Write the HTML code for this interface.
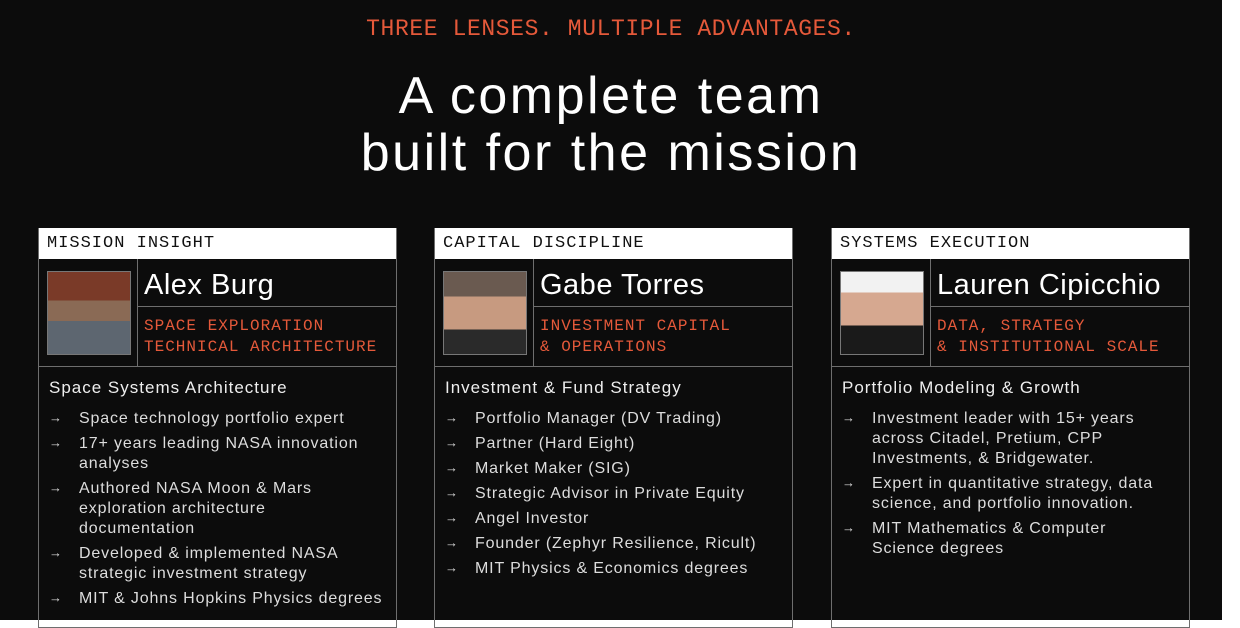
<!DOCTYPE html>
<html><head><meta charset="utf-8"><style>
*{margin:0;padding:0;box-sizing:border-box}
body{width:1240px;height:620px;background:#fff;position:relative;overflow:hidden;font-family:"Liberation Sans",sans-serif}
.bg{position:absolute;left:0;top:0;width:1222px;height:620px;background:#0c0c0c}
.kick{position:absolute;top:16px;left:0;width:1222px;text-align:center;font-family:"Liberation Mono",monospace;color:#e5593a;font-size:23px;letter-spacing:0.6px}
h1{position:absolute;top:68px;left:0;width:1222px;text-align:center;color:#fff;font-weight:400;font-size:52px;line-height:57px;letter-spacing:2.5px}
.card{position:absolute;top:228px;width:359px;height:400px;border:1.5px solid #6e6e6e;border-top:none}
.hd{height:31px;background:#fff;color:#111;font-family:"Liberation Mono",monospace;font-size:17px;padding:6px 8px;letter-spacing:1px}
.ph{position:absolute;left:0;top:31px;width:99px;height:108px;border-right:1.5px solid #6e6e6e;border-bottom:1.5px solid #6e6e6e}
.ph div{position:absolute;left:8px;top:12px;width:84px;height:84px;border:1.5px solid #777}
.nm{position:absolute;left:99px;top:31px;right:0;height:48px;border-bottom:1.5px solid #6e6e6e;color:#fff;font-size:29px;padding:10px 6px 0;letter-spacing:0.5px}
.rl{position:absolute;left:99px;top:79px;right:0;height:60px;border-bottom:1.5px solid #6e6e6e;color:#e5593a;font-family:"Liberation Mono",monospace;font-size:16px;line-height:21px;padding:9px 6px;letter-spacing:1px}
.bd{position:absolute;left:10px;top:150px;right:0;color:#eee}
.bd h3{font-weight:400;font-size:17px;margin-bottom:11px;letter-spacing:1px}
.bd li{list-style:none;position:relative;padding-left:30px;font-size:16px;line-height:20px;margin-bottom:5px;color:#ddd;letter-spacing:0.85px}
.bd li:before{content:"→";position:absolute;left:0;top:-1px;font-size:13px}
</style></head><body>
<div class="bg"></div>
<div class="kick">THREE LENSES. MULTIPLE ADVANTAGES.</div>
<h1>A complete team<br>built for the mission</h1>

<div class="card" style="left:38px">
<div class="hd">MISSION INSIGHT</div>
<div class="ph"><div style="background:linear-gradient(#7a3a28 0 35%,#8a6a55 35% 60%,#5d6670 60%)"></div></div>
<div class="nm">Alex Burg</div>
<div class="rl">SPACE EXPLORATION<br>TECHNICAL ARCHITECTURE</div>
<div class="bd"><h3>Space Systems Architecture</h3><ul>
<li>Space technology portfolio expert</li>
<li>17+ years leading NASA innovation<br>analyses</li>
<li>Authored NASA Moon &amp; Mars<br>exploration architecture<br>documentation</li>
<li>Developed &amp; implemented NASA<br>strategic investment strategy</li>
<li style="white-space:nowrap">MIT &amp; Johns Hopkins Physics degrees</li></ul></div>
</div>

<div class="card" style="left:434px">
<div class="hd">CAPITAL DISCIPLINE</div>
<div class="ph"><div style="background:linear-gradient(#6a5a50 0 30%,#c79a80 30% 70%,#2a2a2a 70%)"></div></div>
<div class="nm">Gabe Torres</div>
<div class="rl">INVESTMENT CAPITAL<br>&amp; OPERATIONS</div>
<div class="bd"><h3>Investment &amp; Fund Strategy</h3><ul>
<li>Portfolio Manager (DV Trading)</li>
<li>Partner (Hard Eight)</li>
<li>Market Maker (SIG)</li>
<li>Strategic Advisor in Private Equity</li>
<li>Angel Investor</li>
<li>Founder (Zephyr Resilience, Ricult)</li>
<li>MIT Physics &amp; Economics degrees</li></ul></div>
</div>

<div class="card" style="left:831px">
<div class="hd">SYSTEMS EXECUTION</div>
<div class="ph"><div style="background:linear-gradient(#f2f2f2 0 25%,#d6a890 25% 65%,#1a1a1a 65%)"></div></div>
<div class="nm">Lauren Cipicchio</div>
<div class="rl">DATA, STRATEGY<br>&amp; INSTITUTIONAL SCALE</div>
<div class="bd"><h3>Portfolio Modeling &amp; Growth</h3><ul>
<li>Investment leader with 15+ years<br>across Citadel, Pretium, CPP<br>Investments, &amp; Bridgewater.</li>
<li>Expert in quantitative strategy, data<br>science, and portfolio innovation.</li>
<li>MIT Mathematics &amp; Computer<br>Science degrees</li></ul></div>
</div>
</body></html>
